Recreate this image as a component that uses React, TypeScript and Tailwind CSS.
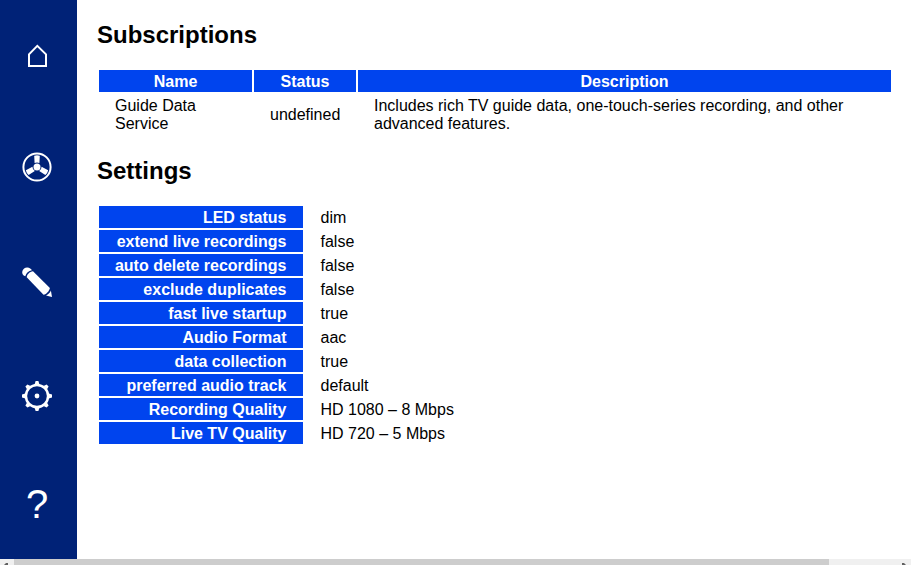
const settings: [string, string][] = [
  ['LED status', 'dim'],
  ['extend live recordings', 'false'],
  ['auto delete recordings', 'false'],
  ['exclude duplicates', 'false'],
  ['fast live startup', 'true'],
  ['Audio Format', 'aac'],
  ['data collection', 'true'],
  ['preferred audio track', 'default'],
  ['Recording Quality', 'HD 1080 – 8 Mbps'],
  ['Live TV Quality', 'HD 720 – 5 Mbps'],
];

function HomeIcon() {
  return (
    <svg viewBox="0 0 32 32" className="size-8" fill="none" stroke="currentColor" strokeWidth="2">
      <path d="M8 26V14.3L16.3 5.8L25 14.3V26Z" />
    </svg>
  );
}

function WheelIcon() {
  return (
    <svg viewBox="-16 -16 32 32" className="size-8" fill="currentColor">
      <circle r="13.6" fill="none" stroke="currentColor" strokeWidth="2" />
      <circle r="3.5" />
      {[0, 120, 240].map((angle) => (
        <path key={angle} transform={`rotate(${angle})`} d="M-2.8 -11.3Q0 -12.2 2.8 -11.3L2.4 -3.9Q0 -5.3 -2.4 -3.9Z" />
      ))}
    </svg>
  );
}

function PencilIcon() {
  return (
    <svg viewBox="0 0 32 32" className="size-8" fill="currentColor">
      <path d="M4.3 10.3C1.8 9.5 .7 7.2 1.4 5C2 2.8 4 1.3 6.3 1.4C8.5 1.5 10.3 2.8 10.9 4.3C7.5 4.7 5.2 7 4.3 10.3Z" />
      <path d="M5.7 11.2C5.8 8.7 8.6 5.5 12 5.2L28.9 22C28.2 25.2 25.5 28.2 22.5 28.8Z" />
      <path d="M25 29.6C27.4 28.6 29.2 26.4 29.9 24.6L31 31Z" />
    </svg>
  );
}

function GearIcon() {
  return (
    <svg viewBox="-16 -16 32 32" className="size-8" fill="currentColor">
      <circle r="11.1" fill="none" stroke="currentColor" strokeWidth="2.5" />
      <circle r="2.4" />
      {[0, 45, 90, 135, 180, 225, 270, 315].map((angle) => (
        <path key={angle} transform={`rotate(${angle})`} d="M-2.4 -11.6L-1.4 -15H1.4L2.4 -11.6Z" />
      ))}
    </svg>
  );
}

export default function App() {
  return (
    <div className="flex h-[565px] w-[911px] flex-col overflow-hidden bg-white font-['Liberation_Sans',Arial,sans-serif] text-base leading-[18px] text-black">
      <div className="flex h-[559px]">
        <nav className="flex w-[77px] shrink-0 flex-col items-center bg-[#002277] pr-[3px] pt-10 text-white">
          <a className="h-[111px]"><HomeIcon /></a>
          <a className="h-[115px]"><WheelIcon /></a>
          <a className="h-[114px]"><PencilIcon /></a>
          <a className="h-[102px]"><GearIcon /></a>
          <a className="text-[40px] leading-[44px]">?</a>
        </nav>
        <main className="w-[834px] pl-5 pr-[18px] pt-[21px]">
          <h2 className="text-2xl font-bold leading-[27px]">Subscriptions</h2>
          <table className="mt-5 w-[796px] table-fixed border-separate border-spacing-[2px]">
            <colgroup>
              <col className="w-[153px]" />
              <col className="w-[102px]" />
              <col />
            </colgroup>
            <thead>
              <tr className="bg-[#0044ee] text-white">
                <th className="px-4 pb-px pt-[3px]">Name</th>
                <th className="px-4 pb-px pt-[3px]">Status</th>
                <th className="px-4 pb-px pt-[3px]">Description</th>
              </tr>
            </thead>
            <tbody>
              <tr>
                <td className="px-4 pb-px pt-[3px]">Guide Data Service</td>
                <td className="px-4 pb-px pt-[3px]">undefined</td>
                <td className="px-4 pb-px pt-[3px]">Includes rich TV guide data, one-touch-series recording, and other advanced features.</td>
              </tr>
            </tbody>
          </table>
          <h2 className="mt-[21px] text-2xl font-bold leading-[27px]">Settings</h2>
          <table className="mt-5 border-separate border-spacing-[2px]">
            <tbody>
              {settings.map(([name, value]) => (
                <tr key={name}>
                  <th className="w-[204px] bg-[#0044ee] pb-px pl-[15.5px] pr-[16.5px] pt-[3px] text-right text-white">{name}</th>
                  <td className="whitespace-nowrap pb-px pl-[15.5px] pr-4 pt-[3px]">{value}</td>
                </tr>
              ))}
            </tbody>
          </table>
        </main>
      </div>
      <div className="flex h-[6px] items-end bg-[#f0f0f0]">
        <svg viewBox="0 0 14 6" className="h-[6px] w-[14px]" fill="#606060">
          <path d="M4 6L6 4H8V6Z" />
        </svg>
        <div className="h-full w-[815px] bg-[#cdcdcd]" />
        <svg viewBox="0 0 82 6" className="h-[6px] w-[82px]" fill="#606060">
          <path d="M73 6V4H75L77 6Z" />
        </svg>
      </div>
    </div>
  );
}
